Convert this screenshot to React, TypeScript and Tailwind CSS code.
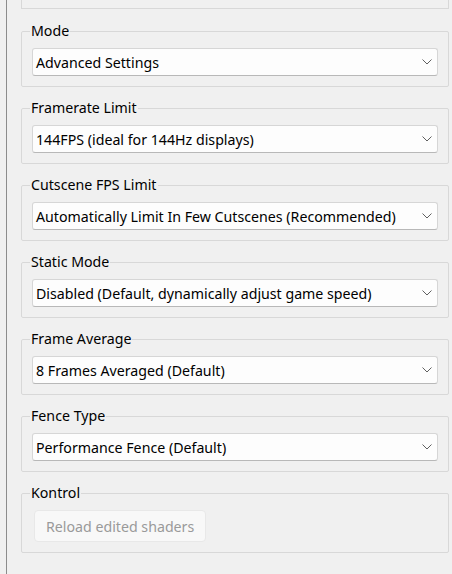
const groups = [
  { title: "Mode", value: "Advanced Settings" },
  { title: "Framerate Limit", value: "144FPS (ideal for 144Hz displays)" },
  { title: "Cutscene FPS Limit", value: "Automatically Limit In Few Cutscenes (Recommended)" },
  { title: "Static Mode", value: "Disabled (Default, dynamically adjust game speed)" },
  { title: "Frame Average", value: "8 Frames Averaged (Default)" },
  { title: "Fence Type", value: "Performance Fence (Default)" },
];

function Chevron() {
  return (
    <svg width="10" height="6" viewBox="0 0 10 6" className="shrink-0">
      <polyline points="0.5,0.5 5,5 9.5,0.5" fill="none" stroke="#606060" strokeWidth="1" />
    </svg>
  );
}

function Combo({ value }: { value: string }) {
  return (
    <div className="flex h-[28px] items-center justify-between rounded-[3px] border border-[#d6d6d6] border-b-[#b8b8b8] bg-[#fdfdfd] pl-[3px] pr-[5px]">
      <span className="pt-[2px] text-[14.2px] text-black">{value}</span>
      <Chevron />
    </div>
  );
}

function Group({ title, children }: { title: string; children: React.ReactNode }) {
  return (
    <fieldset className="rounded-[2px] border border-[#d8d8d8] px-[10px] pb-[10px] pt-[7px]">
      <legend className="ml-[-2px] px-[1px] text-[14.2px] leading-[20px] text-black">{title}</legend>
      {children}
    </fieldset>
  );
}

export default function App() {
  return (
    <div
      className="h-[574px] w-[452px] overflow-hidden bg-[#f0f0f0] pl-[6px]"
      style={{ fontFamily: '"Segoe UI", "Noto Sans", "Open Sans", sans-serif' }}
    >
      <div className="h-full border-l border-[#8c8c8c] pl-[14px] pr-[3px]">
        <div className="h-[9px] border-x border-b border-[#d8d8d8]" />
        <div className="mt-[12px] flex flex-col gap-[11px]">
          {groups.map((g) => (
            <Group key={g.title} title={g.title}>
              <Combo value={g.value} />
            </Group>
          ))}
          <Group title="Kontrol">
            <button className="ml-[2px] h-[32px] rounded-[4px] border border-[#e8e8e8] bg-[#f8f8f8] px-[11px] pt-[2px] text-[14.2px] text-[#9a9a9a]">
              Reload edited shaders
            </button>
          </Group>
        </div>
      </div>
    </div>
  );
}
